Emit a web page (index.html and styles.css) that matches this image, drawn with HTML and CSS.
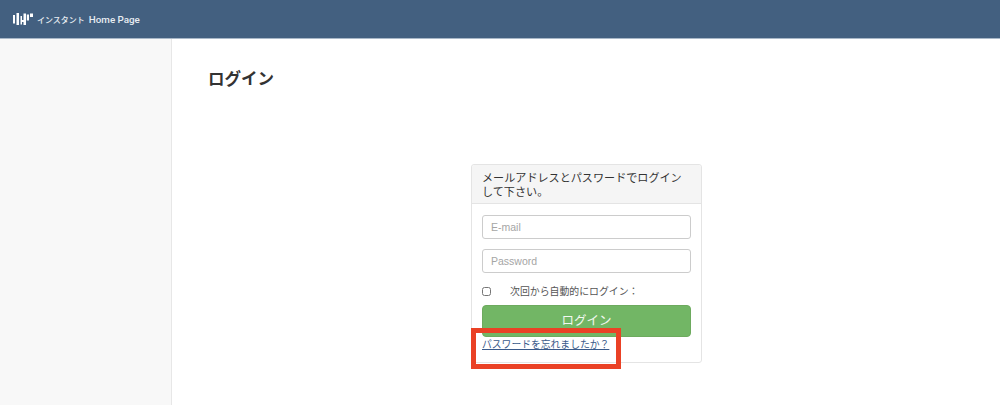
FILE: index.html
```html
<!DOCTYPE html>
<html lang="ja">
<head>
<meta charset="utf-8">
<title>ログイン</title>
<link rel="stylesheet" href="styles.css">
</head>
<body>
<header class="topbar">
  <svg class="logo" width="20" height="14" viewBox="0 0 20 14" aria-hidden="true">
    <path d="M0 3h2v8.500H0zM3.500 1h2.500v12H3.500zM7.500 4h1.500v4h1.500V1.500h2.500V13h-2.500v-3H9v2.500H7.500zM13.800 2.500h2.200v6h-2.200zM17 1.500h3v3.500h-3z" fill="#fff"/>
  </svg>
  <span class="brand"><span class="brand-kana">インスタント</span><span class="brand-latin">Home Page</span></span>
</header>
<div class="layout">
  <aside class="sidebar"></aside>
  <main class="content">
    <h1 class="title">ログイン</h1>
    <div class="card-wrap">
      <section class="card">
        <div class="card-head">メールアドレスとパスワードでログインして下さい。</div>
        <form class="card-body">
          <input class="field" type="text" placeholder="E-mail">
          <input class="field" type="password" placeholder="Password">
          <label class="remember"><input class="check" type="checkbox"><span>次回から自動的にログイン：</span></label>
          <button class="submit" type="button">ログイン</button>
          <a class="forgot" href="#">パスワードを忘れましたか？</a>
        </form>
        <div class="highlight"></div>
      </section>
    </div>
  </main>
</div>
</body>
</html>
```
FILE: styles.css
```css
* { box-sizing: border-box; }
html, body { height: 100%; }
body {
  margin: 0;
  height: 405px;
  overflow: hidden;
  background: #fff;
  color: #333;
  font-family: "Liberation Sans", "Noto Sans CJK JP", sans-serif;
  display: flex;
  flex-direction: column;
}
.topbar {
  height: 39px;
  flex: none;
  background: #436080;
  border-bottom: 1px solid #a9b8c8;
  display: flex;
  align-items: center;
  padding-left: 13px;
  gap: 4px;
}
.logo { flex: none; }
.brand {
  color: #e8edf2;
  font-family: "Roboto", "Noto Sans CJK JP", sans-serif;
  font-weight: 500;
  display: flex;
  align-items: center;
  gap: 4px;
}
.brand-kana { font-size: 8px; }
.brand-latin { font-size: 9.800px; }
.layout { flex: 1; display: flex; min-height: 0; }
.sidebar {
  width: 172px;
  flex: none;
  background: #f8f8f8;
  border-right: 1px solid #e7e7e7;
}
.content { flex: 1; padding: 28px 0 0 36px; }
.title {
  margin: 0;
  font-size: 16.500px;
  line-height: 24px;
  font-weight: 700;
  color: #333;
}
.card-wrap { padding: 73px 0 0 263px; }
.card {
  position: relative;
  width: 231px;
  height: 199px;
  background: #fff;
  border: 1px solid #e4e4e4;
  border-radius: 3px;
}
.card-head {
  height: 39px;
  padding: 6px 10px 0;
  background: #f5f5f5;
  border-bottom: 1px solid #e4e4e4;
  font-size: 11.100px;
  line-height: 14px;
  color: #333;
  border-radius: 3px 3px 0 0;
}
.card-body { padding: 11px 10px 0; display: flex; flex-direction: column; }
.field {
  width: 209px;
  height: 24px;
  margin-bottom: 10px;
  padding: 0 8px;
  border: 1px solid #ccc;
  border-radius: 3px;
  font-family: inherit;
  font-size: 10.500px;
  background: #fff;
}
.field::placeholder { color: #a5a5a5; opacity: 1; }
.remember {
  display: flex;
  align-items: center;
  height: 14px;
  margin-top: 1px;
  font-size: 9.900px;
  color: #555;
}
.check { width: 9px; height: 9px; margin: 0 19px 0 0; flex: none; }
.submit {
  width: 209px;
  height: 32px;
  margin-top: 7px;
  padding: 0 0 3px;
  border: 1px solid #6daa5e;
  border-radius: 4px;
  background: #72b665;
  color: #f2f8f0;
  font-family: inherit;
  font-size: 12.500px;
  cursor: pointer;
}
.forgot {
  margin-top: 1px;
  align-self: flex-start;
  font-size: 9.800px;
  line-height: 13px;
  color: #3a5a8a;
  text-decoration: underline;
}
.highlight {
  position: absolute;
  left: -1px;
  top: 163px;
  width: 150px;
  height: 41px;
  border: 5px solid #ea4125;
  pointer-events: none;
}
```
